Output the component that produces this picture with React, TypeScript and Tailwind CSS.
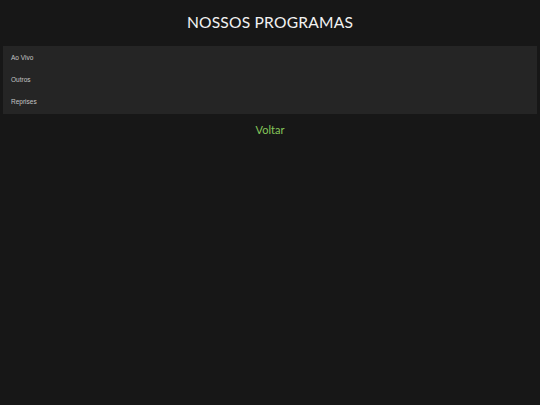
import React from "react";

export default function App() {
  const items = ["Ao Vivo", "Outros", "Reprises"];
  return (
    <div className="min-h-[405px] w-full bg-[#171717] pt-[12px]" style={{ fontFamily: "Lato, 'Noto Sans', sans-serif" }}>
      <h1 className="text-center text-[15.6px] leading-[20px] text-[#f2f2f2] tracking-[0.2px]">NOSSOS PROGRAMAS</h1>
      <div className="mx-[3px] mt-[14px] bg-[#252525] py-[1px]">
        {items.map((it) => (
          <div
            key={it}
            className="flex h-[22px] items-center pl-[8px] text-[6.5px] text-[#c4c4c4]"
            style={{ fontFamily: "'Liberation Sans', Arial, sans-serif" }}
          >
            {it}
          </div>
        ))}
      </div>
      <div className="mt-[8px] text-center text-[11px] leading-[16px] text-[#86c65a]">Voltar</div>
    </div>
  );
}
